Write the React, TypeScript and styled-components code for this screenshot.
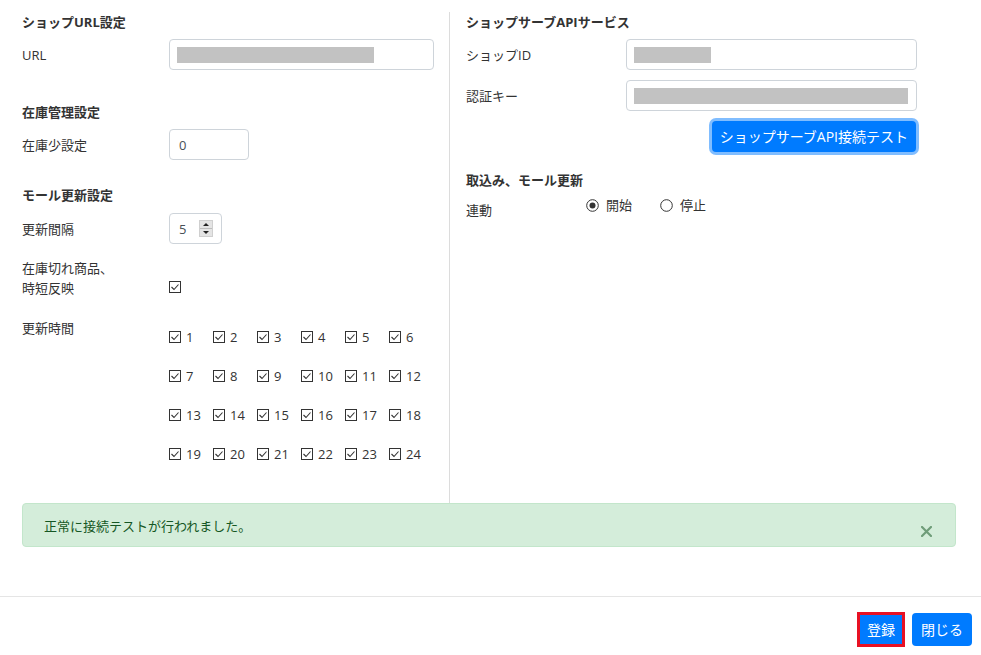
import React from "react";
import styled, { createGlobalStyle } from "styled-components";

const Global = createGlobalStyle`
  html, body { margin: 0; padding: 0; background: #fff; }
  body {
    font-family: "Open Sans", "Noto Sans CJK JP", sans-serif;
    font-size: 13px;
    color: #333;
  }
  * { box-sizing: border-box; }
`;

const Page = styled.div`
  width: 981px;
  height: 655px;
  display: flex;
  flex-direction: column;
  overflow: hidden;
`;

const Columns = styled.div`
  display: flex;
  margin-top: 12px;
  height: 491px;
`;

const LeftCol = styled.div`
  width: 450px;
  border-right: 1px solid #dcdcdc;
  padding-left: 22px;
  display: flex;
  flex-direction: column;
`;

const RightCol = styled.div`
  width: 467px;
  padding-left: 16px;
  display: flex;
  flex-direction: column;
`;

const SectionTitle = styled.div<{ $mt?: number }>`
  height: 20px;
  line-height: 20px;
  font-weight: 700;
  color: #333;
  margin-top: ${(p) => p.$mt ?? 0}px;
`;

const FieldRow = styled.div<{ $mt?: number }>`
  display: flex;
  align-items: center;
  margin-top: ${(p) => p.$mt ?? 0}px;
`;

const Label = styled.div<{ $w: number }>`
  width: ${(p) => p.$w}px;
  flex-shrink: 0;
  line-height: 20px;
`;

const TextBox = styled.div<{ $w: number }>`
  width: ${(p) => p.$w}px;
  height: 31px;
  border: 1px solid #ced4da;
  border-radius: 4px;
  padding: 0 8px 0 7px;
  display: flex;
  align-items: center;
  color: #495057;
  font-size: 13px;
`;

const Masked = styled.div<{ $w: number }>`
  width: ${(p) => p.$w}px;
  height: 16px;
  background: #c2c2c2;
`;

const Spinner = styled.span`
  margin-left: auto;
  width: 14px;
  height: 17px;
  background: #e4e4e4;
  border: 1px solid #cfcfcf;
  display: flex;
  flex-direction: column;
  align-items: center;
  justify-content: space-around;
  position: relative;
  &::after {
    content: "";
    position: absolute;
    left: 0;
    right: 0;
    top: 7px;
    height: 1px;
    background: #bdbdbd;
  }
`;

const Tri = styled.span<{ $down?: boolean }>`
  width: 0;
  height: 0;
  border-left: 3px solid transparent;
  border-right: 3px solid transparent;
  ${(p) =>
    p.$down ? "border-top: 3px solid #222;" : "border-bottom: 3px solid #222;"}
`;

const NumberValue = styled.span`
  padding-left: 2px;
`;

const StockRow = styled.div`
  display: flex;
  align-items: flex-end;
  margin-top: 14px;
`;

const CheckWrap = styled.span<{ $mb?: number }>`
  display: inline-flex;
  width: 12px;
  height: 12px;
  margin-bottom: ${(p) => p.$mb ?? 0}px;
  flex-shrink: 0;
`;

const HoursRow = styled.div`
  display: flex;
  align-items: flex-start;
  margin-top: 19px;
`;

const HoursLabel = styled(Label)`
  margin-top: 1px;
`;

const HoursGrid = styled.div`
  display: grid;
  grid-template-columns: repeat(6, 44px);
  grid-auto-rows: 39px;
`;

const HourItem = styled.label`
  display: flex;
  align-items: center;
  gap: 5px;
  font-size: 13px;
  color: #333;
`;

const ButtonRow = styled.div`
  display: flex;
  justify-content: flex-end;
  margin-top: 10px;
  padding-right: 1px;
`;

const PrimaryButton = styled.button<{ $focus?: boolean; $marked?: boolean; $footer?: boolean }>`
  height: ${(p) => (p.$footer ? 33 : 31)}px;
  padding: 0 ${(p) => (p.$footer ? 9 : 8)}px;
  background: #007bff;
  color: #fff;
  border: none;
  border-radius: ${(p) => (p.$marked ? 0 : 4)}px;
  font-family: "Open Sans", "Noto Sans CJK JP", sans-serif;
  font-size: 14px;
  line-height: 1;
  cursor: pointer;
  box-shadow: ${(p) => (p.$focus ? "0 0 0 3px #80bdff" : "none")};
  outline: ${(p) => (p.$marked ? "3px solid #e81123" : "none")};
  outline-offset: -2px;
`;

const RadioRow = styled.div`
  display: flex;
  align-items: flex-start;
  margin-top: 5px;
`;

const RadioLabel = styled(Label)`
  margin-top: 5px;
`;

const RadioGroup = styled.div`
  display: flex;
  align-items: center;
  gap: 28px;
  line-height: 20px;
`;

const RadioItem = styled.label`
  display: flex;
  align-items: center;
  gap: 7px;
`;

const Alert = styled.div`
  margin: 0 25px 0 22px;
  height: 44px;
  background: #d4edda;
  border: 1px solid #c3e6cb;
  border-radius: 4px;
  color: #155724;
  padding: 0 23px 0 21px;
  display: flex;
  justify-content: space-between;
  align-items: center;
  font-size: 13px;
`;

const CloseIcon = styled.svg`
  align-self: flex-end;
  margin-bottom: 9px;
`;

const Footer = styled.div`
  margin-top: 49px;
  border-top: 1px solid #e5e5e5;
  padding: 16px 9px 0 0;
  display: flex;
  justify-content: flex-end;
  gap: 8px;
`;

const CheckIcon = ({ mb }: { mb?: number }) => (
  <CheckWrap $mb={mb}>
    <svg width="12" height="12" viewBox="0 0 12 12">
      <rect x="0.5" y="0.5" width="11" height="11" fill="#fff" stroke="#333" strokeWidth="1" />
      <polyline points="2.5,6 5,8.5 9.5,3.5" fill="none" stroke="#333" strokeWidth="1.1" />
    </svg>
  </CheckWrap>
);

const Radio = ({ checked }: { checked?: boolean }) => (
  <svg width="13" height="13" viewBox="0 0 13 13">
    <circle cx="6.5" cy="6.5" r="5.8" fill="#fff" stroke="#333" strokeWidth="1" />
    {checked && <circle cx="6.5" cy="6.5" r="3" fill="#333" />}
  </svg>
);

const hours = Array.from({ length: 24 }, (_, i) => i + 1);

export default function App() {
  return (
    <Page>
      <Global />
      <Columns>
        <LeftCol>
          <SectionTitle>ショップURL設定</SectionTitle>
          <FieldRow $mt={7}>
            <Label $w={147}>URL</Label>
            <TextBox $w={265}>
              <Masked $w={197} />
            </TextBox>
          </FieldRow>

          <SectionTitle $mt={32}>在庫管理設定</SectionTitle>
          <FieldRow $mt={7}>
            <Label $w={147}>在庫少設定</Label>
            <TextBox $w={80}>
              <NumberValue>0</NumberValue>
            </TextBox>
          </FieldRow>

          <SectionTitle $mt={25}>モール更新設定</SectionTitle>
          <FieldRow $mt={8}>
            <Label $w={147}>更新間隔</Label>
            <TextBox $w={53}>
              <NumberValue>5</NumberValue>
              <Spinner>
                <Tri />
                <Tri $down />
              </Spinner>
            </TextBox>
          </FieldRow>

          <StockRow>
            <Label $w={147}>
              在庫切れ商品、
              <br />
              時短反映
            </Label>
            <CheckIcon mb={5} />
          </StockRow>

          <HoursRow>
            <HoursLabel $w={147}>更新時間</HoursLabel>
            <HoursGrid>
              {hours.map((h) => (
                <HourItem key={h}>
                  <CheckIcon />
                  {h}
                </HourItem>
              ))}
            </HoursGrid>
          </HoursRow>
        </LeftCol>

        <RightCol>
          <SectionTitle>ショップサーブAPIサービス</SectionTitle>
          <FieldRow $mt={7}>
            <Label $w={160}>ショップID</Label>
            <TextBox $w={291}>
              <Masked $w={77} />
            </TextBox>
          </FieldRow>
          <FieldRow $mt={10}>
            <Label $w={160}>認証キー</Label>
            <TextBox $w={291}>
              <Masked $w={274} />
            </TextBox>
          </FieldRow>
          <ButtonRow>
            <PrimaryButton $focus>ショップサーブAPI接続テスト</PrimaryButton>
          </ButtonRow>

          <SectionTitle $mt={18}>取込み、モール更新</SectionTitle>
          <RadioRow>
            <RadioLabel $w={120}>連動</RadioLabel>
            <RadioGroup>
              <RadioItem>
                <Radio checked />
                開始
              </RadioItem>
              <RadioItem>
                <Radio />
                停止
              </RadioItem>
            </RadioGroup>
          </RadioRow>
        </RightCol>
      </Columns>

      <Alert>
        <span>正常に接続テストが行われました。</span>
        <CloseIcon width="11" height="11" viewBox="0 0 11 11">
          <path d="M1 1 L10 10 M10 1 L1 10" stroke="#6f9d79" strokeWidth="2.2" strokeLinecap="square" />
        </CloseIcon>
      </Alert>

      <Footer>
        <PrimaryButton $footer $marked>登録</PrimaryButton>
        <PrimaryButton $footer>閉じる</PrimaryButton>
      </Footer>
    </Page>
  );
}
